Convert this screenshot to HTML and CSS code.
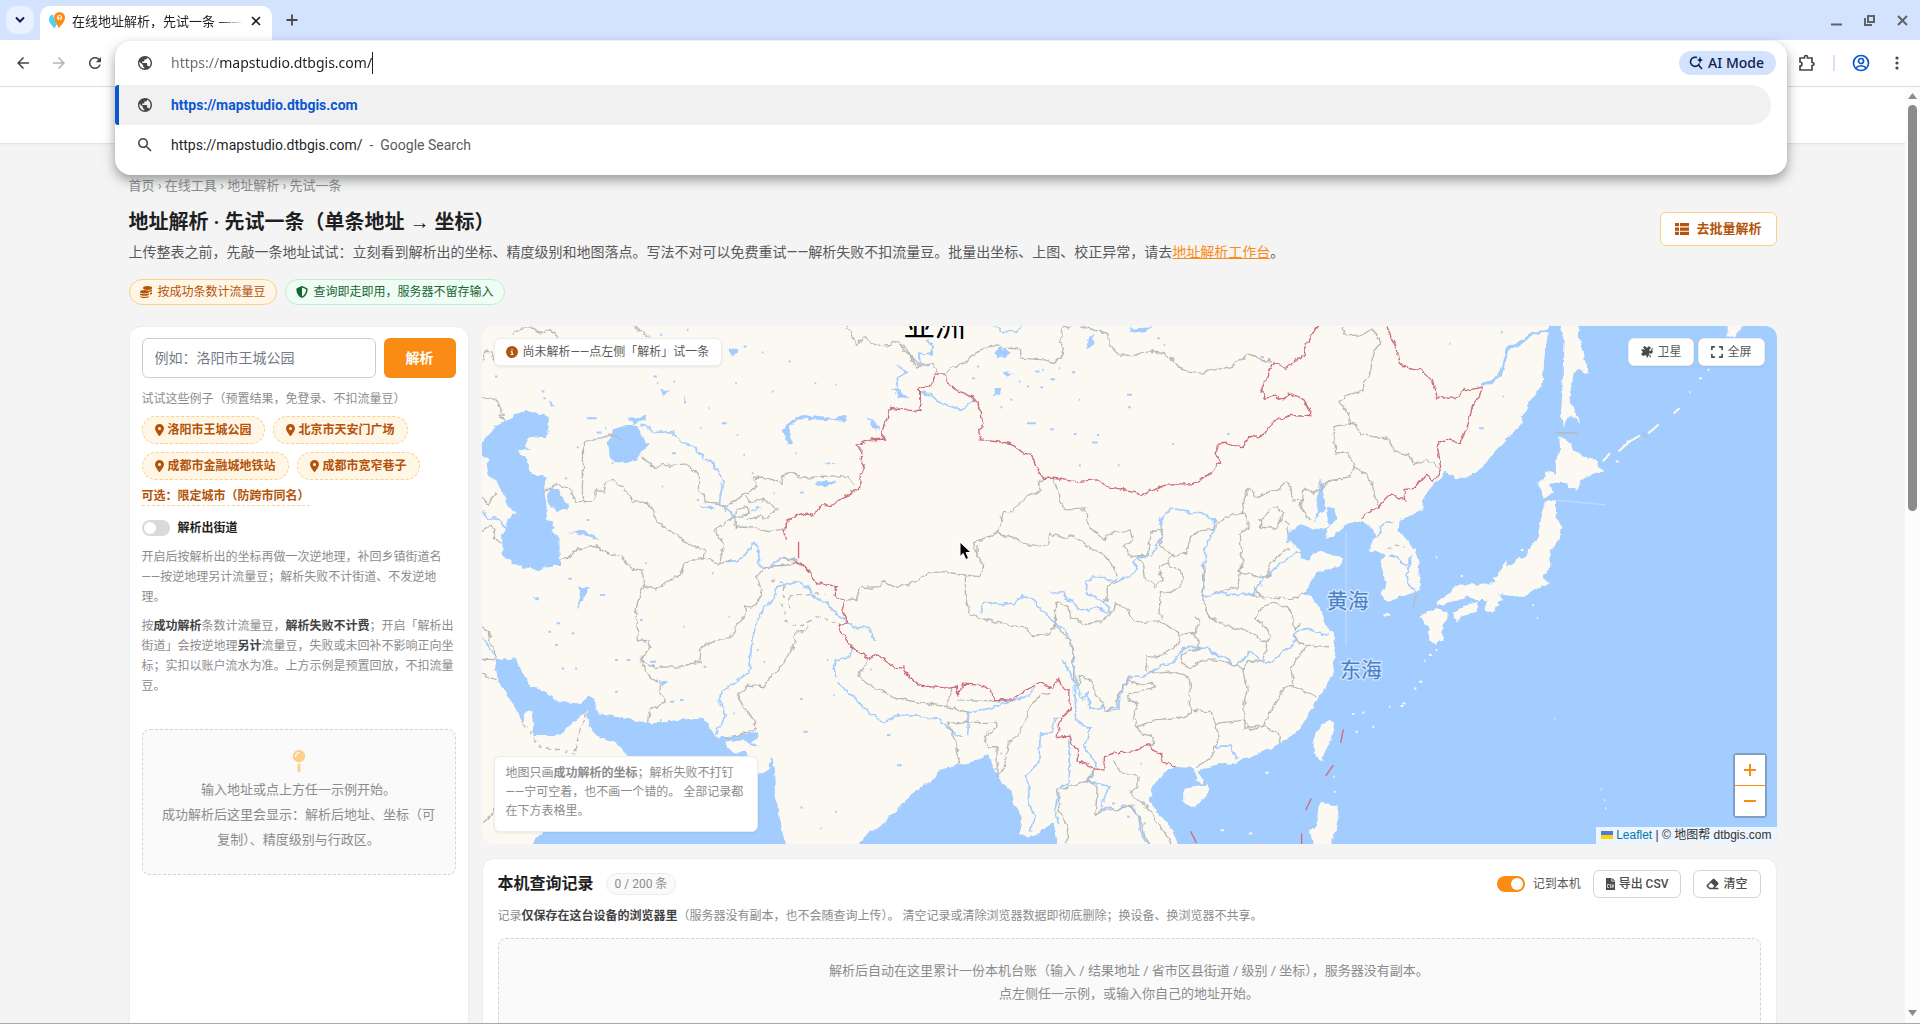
FILE: index.html
```html
<!DOCTYPE html>
<html lang="zh-CN">
<head>
<meta charset="utf-8">
<title>在线地址解析，先试一条</title>
<link rel="stylesheet" href="styles.css">
</head>
<body>
<svg class="defs" aria-hidden="true">
  <symbol id="i-pin" viewBox="0 0 384 512"><path d="M215.700 499.200C267 435 384 279.400 384 192C384 86 298 0 192 0S0 86 0 192c0 87.400 117 243 168.300 307.200c12.300 15.300 35.100 15.300 47.400 0zM192 128a64 64 0 1 1 0 128 64 64 0 1 1 0-128z"/></symbol>
  <symbol id="i-globe" viewBox="2 2 20 20"><path d="M12 2C6.480 2 2 6.480 2 12s4.480 10 10 10 10-4.480 10-10S17.520 2 12 2zm-1 17.930c-3.950-.490-7-3.850-7-7.930 0-.620.080-1.210.210-1.790L9 15v1c0 1.100.900 2 2 2v1.930zm6.900-2.540c-.260-.810-1-1.390-1.900-1.390h-1v-3c0-.550-.450-1-1-1H8v-2h2c.550 0 1-.450 1-1V7h2c1.100 0 2-.900 2-2v-.410c2.930 1.190 5 4.060 5 7.410 0 2.080-.800 3.970-2.100 5.390z"/></symbol>
</svg>
<div class="window">
  <div class="tabstrip">
    <button class="tab-search" aria-label="搜索标签页"><svg width="10" height="8" viewBox="0 0 10 8"><path d="M1 1.500l4 4 4-4" fill="none" stroke="#0b2350" stroke-width="2"/></svg></button>
    <div class="tab">
      <svg width="18" height="18" viewBox="0 0 18 18"><path d="M5 2.500C2 3 1 5 1 7.500 1 11 4 13 6.500 16.500L9 12 6 7z" fill="#4fd0f5"/><path d="M11.500 0A5.500 5.500 0 0 0 6 5.500C6 10 10 12 10.500 16.500 13 13 17 10 17 5.500A5.500 5.500 0 0 0 11.500 0z" fill="#fb8c1a"/><circle cx="11.500" cy="5.500" r="2.600" fill="#fff3dc"/><path d="M10.500 4.500h2l-1 3" fill="none" stroke="#fb8c1a"/></svg>
      <span class="tab-title">在线地址解析，先试一条 ——</span>
      <button class="tab-close" aria-label="关闭"><svg width="10" height="10" viewBox="0 0 10 10"><path d="M1 1l8 8M9 1L1 9" stroke="#1f1f1f" stroke-width="1.600"/></svg></button>
    </div>
    <button class="tab-new" aria-label="新标签页"><svg width="12" height="12" viewBox="0 0 12 12"><path d="M6 0.500v11M0.500 6h11" stroke="#474747" stroke-width="1.800"/></svg></button>
    <div class="win-btns">
      <button aria-label="最小化"><svg width="11" height="11" viewBox="0 0 11 11"><path d="M0 9.500h11" stroke="#5f6368" stroke-width="2"/></svg></button>
      <button aria-label="还原"><svg width="11" height="11" viewBox="0 0 11 11"><path d="M4 1h6v6H4zM1 3v7h7" fill="none" stroke="#5f6368" stroke-width="2"/></svg></button>
      <button aria-label="关闭窗口"><svg width="11" height="11" viewBox="0 0 11 11"><path d="M1 1l9 9M10 1L1 10" stroke="#5f6368" stroke-width="2"/></svg></button>
    </div>
  </div>
  <div class="toolbar">
    <button aria-label="后退"><svg width="18" height="18" viewBox="0 0 24 24" fill="#474747"><path d="M20 11H7.830l5.590-5.590L12 4l-8 8 8 8 1.410-1.410L7.830 13H20v-2z"/></svg></button>
    <button aria-label="前进"><svg width="18" height="18" viewBox="0 0 24 24" fill="#b4b4b4"><path d="M4 11h12.170l-5.590-5.590L12 4l8 8-8 8-1.410-1.410L16.170 13H4v-2z"/></svg></button>
    <button aria-label="刷新"><svg width="18" height="18" viewBox="0 0 24 24" fill="#474747"><path d="M17.650 6.350C16.200 4.900 14.210 4 12 4c-4.420 0-7.990 3.580-7.990 8s3.570 8 7.990 8c3.730 0 6.840-2.550 7.730-6h-2.080c-.820 2.330-3.040 4-5.650 4-3.310 0-6-2.690-6-6s2.690-6 6-6c1.660 0 3.140.690 4.220 1.780L13 11h7V4l-2.350 2.350z"/></svg></button>
    <span class="grow"></span>
    <button aria-label="扩展程序"><svg width="18" height="18" viewBox="0 0 18 18"><path d="M2 4h4.500V3a1.500 1.500 0 0 1 3 0v1H14v4.500h.5a1.500 1.500 0 0 1 0 3H14V16H2v-4a2 2 0 0 0 0-4z" fill="none" stroke="#474747" stroke-width="1.700"/></svg></button>
    <span class="sep"></span>
    <button aria-label="个人资料"><svg width="18" height="18" viewBox="0 0 18 18" fill="none" stroke="#0b57d0" stroke-width="1.700"><circle cx="9" cy="9" r="7.500"/><circle cx="9" cy="7" r="2.500"/><path d="M4 14c2-3 8-3 10 0"/></svg></button>
    <button aria-label="菜单"><svg width="18" height="18" viewBox="0 0 18 18" fill="#474747"><circle cx="9" cy="4" r="1.600"/><circle cx="9" cy="9" r="1.600"/><circle cx="9" cy="14" r="1.600"/></svg></button>
  </div>
  <div class="omnibox">
    <div class="url-row">
      <svg class="ico14" fill="#474747"><use href="#i-globe"/></svg>
      <input class="url" aria-label="地址栏" value="https://mapstudio.dtbgis.com/">
      <button class="ai"><svg width="14" height="14" viewBox="0 0 14 14" fill="none" stroke="#0b2350" stroke-width="1.600"><path d="M8 1.600A4.600 4.600 0 1 0 10.400 7.500M9 8.500l4 4.500"/><path d="M11 0.500l1 2.500 2 1-2 1-1 2.500L10 5 8 4l2-1z" fill="#0b2350" stroke="none"/></svg>AI Mode</button>
    </div>
    <a class="sug active" href="#"><svg class="ico14" fill="#474747"><use href="#i-globe"/></svg><b>https://mapstudio.dtbgis.com</b></a>
    <a class="sug" href="#"><svg class="ico14" viewBox="3 3 18 18" fill="#474747"><path d="M15.500 14h-.790l-.280-.270A6.470 6.470 0 0 0 16 9.500 6.500 6.500 0 1 0 9.500 16c1.610 0 3.090-.590 4.230-1.570l.270.280v.790l5 4.990L20.490 19l-4.990-5zm-6 0C7.010 14 5 11.990 5 9.500S7.010 5 9.500 5 14 7.010 14 9.500 11.990 14 9.500 14z"/></svg><span>https://mapstudio.dtbgis.com/</span><span class="src">- &nbsp;Google Search</span></a>
  </div>

  <div class="viewport">
    <div class="page">
      <header class="site-header"></header>
      <main class="main">
        <nav class="crumbs">首页 › 在线工具 › 地址解析 › 先试一条</nav>
        <div class="head">
          <div>
            <h1>地址解析 · 先试一条（单条地址 → 坐标）</h1>
            <p class="lead">上传整表之前，先敲一条地址试试：立刻看到解析出的坐标、精度级别和地图落点。写法不对可以免费重试——解析失败不扣流量豆。批量出坐标、上图、校正异常，请去<a href="#">地址解析工作台</a>。</p>
          </div>
          <button class="batch"><svg width="14" height="14" viewBox="0 0 14 14"><path d="M0 1h4v3.300H0zM5 1h9v3.300H5zM0 5.400h4v3.300H0zM5 5.400h9v3.300H5zM0 9.800h4v3.300H0zM5 9.800h9v3.300H5z" fill="#b45309"/></svg>去批量解析</button>
        </div>
        <div class="badges">
          <span class="badge amber"><svg width="12" height="12" viewBox="0 0 12 12"><g fill="#b45309"><ellipse cx="7.500" cy="2" rx="4.500" ry="1.900"/><path d="M9 4.500c1.500-.2 2.500-.7 3-1.300v1.300c0 .8-1 1.300-2.500 1.600zM10 7c1-.2 1.600-.5 2-1v1.200c0 .8-.8 1.200-2 1.500zM0 7.300c1 1.200 7.500 1.200 9 0v1.400c-1 1.500-8 1.500-9 0zM0 9.900c1 1.200 7.500 1.200 9 0v.8c-1 1.700-8 1.700-9 0z"/><ellipse cx="4.500" cy="5.800" rx="4.500" ry="1.800"/></g></svg>按成功条数计流量豆</span>
          <span class="badge green"><svg width="12" height="12" viewBox="0 0 512 512"><path fill="#166534" d="M256 0c4.600 0 9.200 1 13.400 2.900L457.700 82.800c22 9.300 38.400 31 38.300 57.200c-.500 99.200-41.300 280.700-213.600 363.200c-16.700 8-36.100 8-52.800 0C57.300 420.700 16.500 239.200 16 140c-.100-26.200 16.300-47.900 38.300-57.200L242.700 2.900C246.800 1 251.400 0 256 0zm0 66.800V444.800C394 378 431.100 230.100 432 141.400L256 66.800z"/></svg>查询即走即用，服务器不留存输入</span>
        </div>
        <div class="cols">
          <section class="card query">
            <form class="ask"><input aria-label="地址" placeholder="例如：洛阳市王城公园"><button type="button">解析</button></form>
            <p class="hint">试试这些例子（预置结果，免登录、不扣流量豆）</p>
            <div class="chips">
              <button><svg class="pin"><use href="#i-pin"/></svg>洛阳市王城公园</button>
              <button><svg class="pin"><use href="#i-pin"/></svg>北京市天安门广场</button>
              <button><svg class="pin"><use href="#i-pin"/></svg>成都市金融城地铁站</button>
              <button><svg class="pin"><use href="#i-pin"/></svg>成都市宽窄巷子</button>
            </div>
            <button class="optional">可选：限定城市（防跨市同名）</button>
            <label class="street"><input class="switch" type="checkbox">解析出街道</label>
            <p class="note">开启后按解析出的坐标再做一次逆地理，补回乡镇街道名——按逆地理另计流量豆；解析失败不计街道、不发逆地理。</p>
            <p class="note">按<b>成功解析</b>条数计流量豆，<b>解析失败不计费</b>；开启「解析出街道」会按逆地理<b>另计</b>流量豆，失败或未回补不影响正向坐标；实扣以账户流水为准。上方示例是预置回放，不扣流量豆。</p>
            <div class="empty result">
              <svg width="14" height="22" viewBox="0 0 320 512"><path fill="#fdcf8a" d="M16 144a144 144 0 1 1 288 0A144 144 0 1 1 16 144zM160 80c8.800 0 16-7.200 16-16s-7.200-16-16-16c-53 0-96 43-96 96c0 8.800 7.200 16 16 16s16-7.200 16-16c0-35.300 28.700-64 64-64zM128 480V317.100c10.400 1.900 21.100 2.900 32 2.900s21.600-1 32-2.900V480c0 17.700-14.300 32-32 32s-32-14.300-32-32z"/></svg>
              <p>输入地址或点上方任一示例开始。<br>成功解析后这里会显示：解析后地址、坐标（可复制）、精度级别与行政区。</p>
            </div>
          </section>
          <div class="right">
            <section class="map">
              <svg class="map-art" viewBox="6 18 3882 1554" preserveAspectRatio="xMidYMid slice">
                <defs><filter id="rough" filterUnits="userSpaceOnUse" x="-60" y="-60" width="4060" height="1760" color-interpolation-filters="sRGB"><feTurbulence type="fractalNoise" baseFrequency="0.05" numOctaves="2" seed="4"/><feDisplacementMap in="SourceGraphic" scale="18" xChannelSelector="R" yChannelSelector="G"/></filter></defs>
                <rect x="-60" y="-60" width="4060" height="1760" fill="#fcf9f2"/>
                <g filter="url(#rough)">
                  <g class="water">
                    <path d="M75 305L100 290 120 278 150 272 175 282 206 288 206 320 198 352 165 350 150 352 130 375 148 390 115 390 118 400 135 408 150 435 148 458 175 470 197 475 192 510 198 540 200 570 198 600 222 605 220 625 210 630 238 655 240 738 210 738 175 750 130 742 85 720 68 700 66 640 80 625 82 600 95 582 115 580 85 560 70 520 50 490 25 460 20 430 30 420 0 405 0 370 20 345 45 320Z"/>
                    <path d="M205 507H240V525L267 553 265 570H230L202 548ZM440 315H475L482 345 505 375 480 400 468 422 440 430 390 420 385 370 400 328ZM445 293L477 292 503 284 494 303 460 310ZM908 325L938 300 965 285 1000 290 1060 297 1100 286 1098 302 1040 302 980 297 955 300 930 320 928 345 940 377 925 375 912 345ZM1150 290L1180 300 1198 325 1178 325 1175 305ZM1000 490L1035 480 1070 487 1035 502ZM1030 423L1072 427 1050 431ZM745 85L775 95 750 110ZM540 208L568 212 550 226ZM207 245L225 260 210 262ZM608 232L620 245 612 250ZM260 640L300 630 330 640 357 667 325 648 290 640ZM1232 210L1260 213 1285 235 1260 232ZM655 557L705 563 690 570ZM1840 40L1838 70 1820 88 1820 60ZM1940 27L2015 22 2000 33 1960 38ZM1545 95L1560 82 1595 98 1570 112 1548 115ZM1565 155L1600 160 1580 168ZM1540 230L1545 210 1563 205 1560 222ZM295 800L330 802 320 820 290 870 300 830ZM540 1080L560 1085 545 1100ZM160 828L180 835 170 845ZM1250 0Z"/>
                    <path d="M48 1020L105 1015 130 1060 155 1100 185 1105 230 1145 300 1150 325 1130 342 1135 355 1180 420 1192 500 1208 600 1200 662 1192 690 1225 710 1255 735 1250 830 1235 832 1260 810 1265 840 1280 820 1278 798 1262 740 1262 740 1280 760 1298 800 1295 790 1370 850 1358 865 1340 870 1310 880 1330 885 1420 900 1500 922 1590H140L185 1540 445 1307 410 1270 350 1250 325 1210 320 1170 300 1190 265 1220 240 1245 165 1245 130 1210 100 1150 60 1090 45 1050Z"/>
                    <path d="M1130 1590L1150 1550 1205 1515 1240 1480 1300 1415 1340 1390 1365 1370 1368 1350 1440 1335 1490 1320 1525 1300 1535 1340 1560 1380 1590 1410 1600 1450 1615 1470 1625 1510 1615 1545 1660 1548 1690 1525 1720 1510 1736 1590Z"/>
                    <path d="M2520 475L2545 620 2500 630 2460 610 2420 640 2420 665 2460 690 2460 715 2485 722 2500 700 2520 690 2530 740 2500 770 2475 815 2500 780 2470 820 2500 840 2525 880 2530 910 2560 940 2565 990 2560 1020 2555 1070 2535 1100 2515 1135 2485 1180 2455 1230 2400 1270 2350 1295 2300 1310 2270 1325 2220 1330 2170 1345 2150 1360 2170 1380 2165 1388 2145 1380 2140 1345 2085 1340 2060 1350 2030 1380 2010 1410 2008 1445 2040 1485 2070 1525 2105 1590H3990V-50H3213L3200 50 3192 100 3185 195 3145 245 3120 310 3040 400 3010 440 2960 472 2925 475 2895 455 2875 480 2855 495 2828 530 2825 570 2760 600 2750 630 2780 660 2805 700 2817 740 2817 810 2760 832 2720 845 2700 825 2718 790 2700 720 2715 705 2685 695 2665 690 2670 670 2685 650 2675 625 2640 605 2595 615 2555 650 2532 655 2545 620 2566 600 2565 575 2548 560 2520 575 2500 610Z"/>
                  </g>
                  <g class="land">
                    <path d="M2490 705L2520 690 2550 708 2587 715 2580 735 2545 745 2510 758 2480 790ZM135 1175L155 1170 160 1230 145 1235 130 1210Z"/>
                    <path d="M3238 0H3286L3305 95 3325 165 3295 150 3278 160 3265 240 3285 280 3298 308 3282 290 3260 290 3248 325 3240 290 3245 200 3248 60ZM3740 0H3810L3760 50H3740ZM3235 345L3255 360 3280 390 3320 415 3350 420 3355 440 3370 455 3340 460 3300 480 3290 512 3240 485 3205 492 3220 518 3185 535 3182 505 3170 500 3175 485 3195 470 3192 455 3225 460 3225 430 3238 390ZM3363 425L3390 397 3395 402ZM3412 395L3440 360 3480 345 3440 370ZM3500 340L3535 312 3510 335ZM3575 282L3600 258Z"/>
                    <path d="M3195 545L3225 540 3225 590 3245 620 3230 670 3210 690 3208 740 3190 770 3200 790 3180 800 3160 810 3140 825 3120 830 3070 825 3050 820 3065 835 3035 880 3010 865 3020 840 2990 840 2960 830 2920 845 2870 858 2868 845 2905 820 2920 800 2970 792 3040 790 3040 775 3068 740 3075 715 3080 740 3140 700 3170 650 3180 600ZM2915 875L2960 855 2990 845 2995 860 2975 880 2940 890 2930 908ZM2820 885L2865 865 2900 875 2900 895 2885 920 2885 960 2865 975 2845 960 2845 920 2830 910ZM2705 885L2725 877 2730 883 2710 890Z"/>
                    <path d="M2545 1200L2560 1205 2555 1250 2535 1290 2522 1325 2500 1295 2498 1260 2520 1220ZM2125 1400L2185 1392 2185 1415 2145 1462 2108 1445 2108 1420ZM2515 1448L2570 1455 2575 1500 2560 1540 2545 1590H2500L2488 1530 2505 1525Z"/>
                  </g>
                  <g class="river">
                    <path d="M480 316L505 320 515 338 575 335 600 365 650 385 670 418 690 420 728 480 718 548 765 592M6 570L25 595 65 600 80 628M765 592L800 585 815 568 842 563M745 725L770 722 795 705 820 668 832 680 840 740 860 745 900 715 955 718M1250 135L1280 158 1248 180 1252 205M1320 135L1315 100"/>
                    <path d="M1540 18L1565 35H1610L1625 18M1340 60L1358 80 1355 105 1315 100 1318 130 1345 138M1320 220L1355 225 1380 248 1445 272 1480 238"/>
                    <path d="M1818 810L1820 785 1835 770 1870 770 1885 785H1915L1930 770 1950 768 1973 745 1957 728 1975 710 2012 708 2045 650 2040 600 2072 565H2092L2130 580 2160 577 2202 600V625L2187 660 2172 690 2178 710 2167 735 2172 790 2165 830 2215 818 2240 823H2318L2355 770 2400 730 2445 700 2462 698M1818 800V820L1850 830 1865 850 1890 862 1885 880"/>
                    <path d="M1710 820L1745 815 1760 840 1780 845 1790 870 1820 873 1850 860 1880 880M1503 880L1508 847 1600 853 1625 828 1660 838 1680 868 1705 885 1725 915 1750 925 1770 960 1778 1010 1790 1110 1810 1138 1822 1110 1825 1165 1850 1165 1875 1158M1748 1020L1780 1085 1788 1195 1805 1218 1830 1225 1813 1280 1850 1335 1840 1355 1820 1385 1885 1397 1860 1470 1880 1462 1905 1472 1935 1453 1958 1462 1975 1490 1980 1530 2002 1575M1875 1172L1915 1170 1918 1120 1945 1072 1990 1070 2030 1040 2075 1030 2110 982H2180L2210 1010 2235 1008 2260 1040 2285 1020 2310 993 2340 1025 2375 1027 2400 1000 2440 975 2445 935 2480 928 2545 945M2200 1278H2248L2268 1317"/>
                    <path d="M1765 1255L1767 1390 1733 1403 1725 1470 1735 1510M1740 1188L1725 1190 1710 1240 1680 1242 1675 1325 1635 1370 1645 1400 1645 1450 1665 1490 1650 1535M2735 610L2730 605 2695 620 2698 640 2685 655M2725 708L2745 710 2775 738 2795 710 2778 760 2785 800 2800 810M2880 595"/>
                    <path d="M1665 1100L1630 1135 1580 1145 1530 1165 1465 1175 1462 1250M1250 1185L1330 1190 1380 1198 1410 1230 1440 1250M708 1245L735 1185 715 1140 730 1110 808 1055 815 960 835 890 858 855 885 835 890 800 945 785 980 800 1000 830 1040 848 1070 885 1105 905 1118 922H1168L1175 945 1185 965M1075 1090L1110 1120 1150 1165 1205 1207 1255 1188M1120 985L1105 1010 1065 1020 1060 1040 1068 1075M6 950L50 1015"/>
                    <path stroke-width="9" d="M3205 30L3160 40 3110 75 3080 85 3070 120 3060 160 3035 185 3005 195"/>
                  </g>
                  <g class="line">
                    <path d="M95 45L125 25 160 25 180 40 210 30 235 50M460 18L485 35 505 48M6 125L15 95 35 95 40 120M6 235L35 232 55 250 70 285 58 290 75 303M6 535L25 550 50 520M6 635L30 618 45 625 40 655 65 670M310 545V370L397 343 425 360M310 545H343L345 515 370 508 375 490 400 478 445 520 455 545 500 548 520 570 530 605 580 640 630 675 675 690 672 715M310 545L290 545 265 505 235 495 200 505 190 520M482 402L513 440 620 432 640 450 655 470 655 515 672 520 675 545 715 550 740 560 780 530 810 515 830 500 820 475 865 475 905 490 908 465 935 455 965 475 1050 467 1100 473 1120 495M765 622V570L800 560 810 580 765 592V622H800L830 625 865 635 905 628M715 550L740 575M760 590L735 610 705 625 705 640 730 670 725 700 718 732 755 720M795 530L815 548 850 535 870 555 890 565 860 595 830 590 800 600M718 732L672 712 640 720 612 730 600 765 550 790 530 810 490 797 488 750 455 745 425 710 385 700 350 678 290 688 265 715 240 718M850 745L830 770 845 815 830 855 795 860 795 890 765 920 760 945 700 965 662 985 660 1025 595 1040 525 1042 480 1023 510 980 510 962 475 960 465 860 490 800M480 1023L512 1075 540 1088V1125L557 1135 550 1150 508 1168 502 1208M6 920L25 935 30 970 42 980 45 1015M6 1018H30L50 1020M6 1060L30 1075H50M735 1255L825 1230 820 1195 790 1165 772 1125 805 1095 850 1100 880 1060 905 1035 945 970 945 945 985 920M6 1510L30 1490 50 1460M1100 18L1130 75 1150 50 1185 75 1225 78 1245 65 1272 78 1290 108 1318 138M1100 840L1130 835 1140 803 1200 800 1210 785 1240 800 1280 795 1350 758 1400 755 1440 765 1500 770 1510 735 1490 705 1490 675M850 745L880 738 930 735 950 720 900 715"/>
                    <path d="M1260 75L1285 105 1310 142 1355 128 1375 160M1395 160L1410 145 1460 125 1495 95 1550 75 1575 85 1620 88 1622 115 1690 120 1720 128 1745 110 1752 85 1738 60 1750 25 1770 18M1800 18L1885 42 1890 80 1915 105 1960 107 2000 93 2040 100 2080 120 2105 150 2160 160 2200 150 2255 140 2300 103 2330 110 2345 122 2375 123M1688 475L1675 490V515L1640 530 1605 560 1600 575 1568 575 1562 610 1550 638 1480 668 1485 700 1510 735M1718 475L1735 525 1735 545 1755 570 1818 567V600L1835 630 1875 658 1885 640 1950 630 1955 660 1930 680 1950 710 2000 705 2012 640 2045 630 2040 680 2080 705 2118 700 2130 650 2160 630 2195 625 2220 610 2245 585 2290 580 2285 540 2308 505 2325 530 2390 510 2415 485 2430 500 2435 540 2465 542 2470 505 2500 520 2540 490 2580 475M1550 638L1590 650 1630 670 1690 680 1705 670 1708 640 1750 655 1780 645 1820 680 1865 700 1895 735 1912 770 1905 790 1880 800 1880 840 1865 850M2465 542L2460 565 2490 600M2290 580L2305 620 2280 640 2280 700 2290 720 2275 755 2340 772 2360 770 2370 730 2410 695 2425 688M2340 600L2370 570 2390 560 2410 575 2400 600 2385 625 2340 622ZM2410 600L2425 610 2420 640M1975 715L1990 740 1995 780 2025 800 2045 780 2035 740 2060 725 2065 740 2100 755 2108 780 2100 800 2070 818 2040 815 2035 880 2050 895M2080 705L2060 725M2170 735L2170 800 2165 830 2180 880 2190 895 2260 925 2300 930 2340 960 2360 965M2280 755L2270 800 2220 815"/>
                    <path d="M1455 765L1455 830 1470 885 1540 905 1640 925 1660 950 1710 940 1725 910 1725 855 1740 850 1765 860 1770 890 1820 912 1860 905 1900 870 1905 850 1940 865 1955 900 1990 910 2035 905 2090 930 2100 950 2085 980 2045 1005 1995 1010 2000 1050 2025 1060 2080 1055 2125 1070 2130 1100 2125 1130 2130 1180 2110 1190 2020 1200 1970 1220 1960 1190 1970 1150 1940 1135 1950 1120 2010 1105 2025 1100 2010 1085 1970 1095 1945 1075 1915 1120 1910 1160 1880 1170 1845 1120 1830 1080 1800 1070 1795 1095 1780 1080 1775 980 1770 960 1720 915M2100 950L2130 935 2155 960 2155 985 2105 1000 2105 1030 2130 1045 2165 1020 2210 1020 2250 1030 2290 1045 2300 1025 2350 1020 2360 965 2370 945 2355 920 2325 895 2345 860 2375 850 2420 860 2440 900 2440 930 2465 910M2140 890L2155 900 2145 940 2130 935M2440 940L2450 965 2480 975 2460 1000 2430 1040 2440 1100 2410 1100 2395 1130 2370 1170 2350 1215 2290 1225 2290 1150 2300 1110 2290 1045M2130 1170L2190 1175 2205 1210 2290 1200 2310 1230 2350 1218 2390 1235 2400 1270M2205 1210L2215 1250 2200 1280 2195 1310 2150 1340M2440 1100L2510 1130M1970 1220L1975 1235 2018 1250 2015 1275 1995 1275M2318 823L2380 835 2400 835 2450 835 2470 815M2480 975L2545 980M2320 800L2350 838"/>
                    <path d="M1132 1068L1165 1015M1132 1065L1175 1100 1240 1130 1300 1145 1400 1160 1415 1105M1405 1160L1460 1175 1460 1205 1405 1210 1415 1240 1425 1255 1438 1335M1460 1207H1548L1550 1220 1510 1250 1525 1280 1550 1280 1550 1370 1572 1340 1585 1260 1610 1250 1640 1185 1650 1155 1685 1125 1710 1120M1430 1140L1530 1145 1580 1140M1845 1345L1820 1380 1735 1410 1735 1465 1765 1525 1755 1590M1820 1380L1850 1400 1845 1485 1870 1470 1905 1470 1950 1455 1975 1490 2005 1575M1900 1320L1925 1360 1975 1370 1975 1400 1950 1420 2000 1460 2040 1520 2075 1575M2585 18L2595 48 2640 45 2675 28 2700 65 2675 110 2670 155 2648 190 2650 213 2600 225 2578 245 2600 275 2610 310 2560 320 2565 400 2600 395 2620 440 2610 470 2560 480 2520 495M2610 310L2630 315 2640 345 2720 355 2740 395 2785 405 2800 435 2840 420 2875 445M2620 440L2660 465 2680 510 2690 555"/>
                  </g>
                  <g class="line dash"><path d="M130 1210L180 1280 290 1303M285 1290L300 1230 315 1200 320 1170M870 780L915 790 905 850 915 900 955 920 1010 890 1075 910M925 830L1030 820M925 830L930 880M2720 690L2740 678 2775 682"/></g>
                  <g class="frontier">
                    <path d="M1318 210L1320 270 1295 275 1232 262 1205 340 1215 358 1170 360 1128 375 1145 390 1143 420 1155 445 1140 465 1138 505 1100 525 1055 555 1018 560 1005 585 970 578 920 600 918 620 908 630 920 660M940 725L975 740 1000 780 1035 795 1065 797 1065 825 1095 845 1085 870 1103 905 1075 915 1090 950 1120 985 1170 1018 1185 1002 1240 1040 1270 1045 1290 1075 1320 1095 1350 1100 1410 1104 1428 1100 1432 1125 1450 1092 1500 1095 1525 1105 1545 1138 1595 1140 1655 1100 1680 1088 1715 1105 1735 1078 1750 1108 1768 1115 1770 1165 1735 1210 1730 1250 1768 1245 1775 1275 1792 1285 1790 1320 1835 1345 1870 1350 1872 1310 1900 1298 1960 1295 2000 1272 2020 1290 2040 1300 2045 1325 2085 1340"/>
                    <path d="M1320 270L1320 205 1355 195 1365 163H1395L1400 185 1430 212 1475 230 1503 275 1505 320 1495 335 1500 360 1590 370 1630 400 1655 405 1670 450 1690 475 1720 475 1785 485 1850 480 1880 500 1965 515 1980 528 2060 492 2135 492 2170 475 2220 430 2203 405 2215 370 2235 367 2280 383 2310 350 2350 345 2375 305 2430 287 2490 290 2490 275 2460 230 2425 220 2405 240 2385 228 2355 235 2340 215 2360 170 2380 127 2415 143 2445 120 2465 115 2475 75 2500 35 2515 10M2715 10L2730 50 2745 80 2755 130 2770 140 2820 150 2855 180 2870 235H2922L2950 213 3005 202 2993 235 2975 260 2960 320 2938 368 2895 357 2870 375 2880 445 2870 470 2850 485 2835 465 2800 508 2770 512 2772 540 2730 522 2695 560 2655 580 2643 600"/>
                  </g>
                </g>
                <path class="strait" d="M3225 339H3290M3485 338L3498 355M2798 862L2807 822"/>
                <path class="dashes" d="M955 665V715M2588 1228L2580 1268M2558 1335L2535 1367M2492 1435L2475 1470M2130 1533L2148 1568M2463 1540V1575"/>
                <path class="specks" d="M505 50h5M540 45h6M620 30h5M790 80h9M845 98h5M700 135h5M520 170h10M530 190h5M580 185h5M625 120h5M685 265h4M765 190h5M925 125h6M1003 190h5M1065 195h4M875 215h5M45 170h7M185 215h8M190 235h7M320 295h30M350 338h14M375 325h4M290 382h6M395 430h5M575 400h12M255 475h6M370 518h6M545 500h4M660 325h4M725 310h14M770 345h4M945 400h4M790 405h4M880 520h4M960 518h10M815 460h5M650 540h6M320 600h8M495 730h5M695 760h5M265 776h10M360 825h15M230 910h10M205 935h8M275 940h8M225 975h8M245 1045h7M285 1045h6M405 1020h8M440 1020h10M405 1115h8M480 900h8M490 965h8M610 920h4M745 890h4M510 1025h18M570 1145h12M600 1140h10M540 1200h4M670 1040h8M960 1137h7M970 1235h12M1060 1125h4M1220 1245h10M1250 1335h14M960 1462h7M1065 1475h5M1020 1525h4M850 1025h5M830 990h5M1040 1020h4M1170 1048h4M760 1180h4M1490 140h6M1475 175h8M1665 155h12M1710 178h14M1775 157h9M1735 145h4M1615 185h5M1640 200h6M1680 202h8M1590 240h6M1560 262h6M1940 225h14M1943 262h8M1640 310h26M1710 328h10M1780 342h8M1835 368h16M1850 345h6M1795 437h6M1912 436h5M2075 372h5M2240 342h7M1685 150h5M1795 240h4M2030 55h8M2050 75h4M2340 112h10M3060 37h6M2905 72h4M3065 230h4M2995 325h14M2280 1525h4M1980 1330h4M1895 1450h8M1940 1490h8M1990 1510h6M1985 1540h8M1560 1300h5"/>
                <path class="isles" d="M2845 1005h8M2865 990h5M2800 1105h7M2815 1085h10M2765 1150h9M2760 1158h8M2615 1182h6M2645 1177h6M2625 1235h7M2675 1220h6M2725 1160h4M2830 1022h4M3155 855h4M3168 895h4M3220 1195h3M3360 1408h3M3370 1440h3M3373 1465h3M2355 1358h9M2220 1530h10M2305 1540h10M2558 1370h4M2560 1415h5M3655 175h8M3680 150h6M3625 217h4M3120 690h8M2940 768h6M3405 425h8M2865 712h5M3578 281l18-16M3503 340l30-26M3413 395l30-28 34-20M3366 424l20-22"/>
                <path d="M3228 541L3375 555M2596 635V975" stroke="#c0dcff" stroke-width="4" fill="none"/>
                <g class="sea"><text x="2538" y="863">黄海</text><text x="2578" y="1070">东海</text></g>
                <text class="asia" x="1270" y="50">亚洲</text>
              </svg>
              <div class="float status"><svg width="12" height="12" viewBox="0 0 512 512"><path fill="#b45309" d="M256 512A256 256 0 1 0 256 0a256 256 0 1 0 0 512zM216 336h24V272H216c-13.300 0-24-10.700-24-24s10.700-24 24-24h48c13.300 0 24 10.700 24 24v88h8c13.300 0 24 10.700 24 24s-10.700 24-24 24H216c-13.300 0-24-10.700-24-24s10.700-24 24-24zm40-208a32 32 0 1 1 0 64 32 32 0 1 1 0-64z"/></svg>尚未解析——点左侧「解析」试一条</div>
              <div class="tools">
                <button class="float"><svg width="12" height="12" viewBox="0 0 12 12" fill="#4b4b4b"><path d="M2 1l2-1 2 2 2-2 2 2-2 2 1 1 2-1 1 2-2 2-2-1 0 2-2 3-1-3-3 1-2-2 2-2-2-2 2-1 2 1zM8 8l2 2-1 2zM10 3l2-1-1 3z"/></svg>卫星</button>
                <button class="float"><svg width="12" height="12" viewBox="0 32 448 448"><path fill="#4b4b4b" d="M32 32C14.300 32 0 46.300 0 64v96c0 17.700 14.300 32 32 32s32-14.300 32-32V96h64c17.700 0 32-14.300 32-32s-14.300-32-32-32H32zM64 352c0-17.700-14.300-32-32-32s-32 14.300-32 32v96c0 17.700 14.300 32 32 32h96c17.700 0 32-14.300 32-32s-14.300-32-32-32H64V352zM320 32c-17.700 0-32 14.300-32 32s14.300 32 32 32h64v64c0 17.700 14.300 32 32 32s32-14.300 32-32V64c0-17.700-14.300-32-32-32H320zM448 352c0-17.700-14.300-32-32-32s-32 14.300-32 32v64H320c-17.700 0-32 14.300-32 32s14.300 32 32 32h96c17.700 0 32-14.300 32-32V352z"/></svg>全屏</button>
              </div>
              <div class="float legend">地图只画<b>成功解析的坐标</b>；解析失败不打钉——宁可空着，也不画一个错的。 全部记录都在下方表格里。</div>
              <div class="zoom"><button aria-label="放大"><svg width="12" height="12"><path d="M6 0v12M0 6h12" stroke="#fa8c16" stroke-width="2"/></svg></button><button aria-label="缩小"><svg width="12" height="12"><path d="M0 6h12" stroke="#fa8c16" stroke-width="2"/></svg></button></div>
              <div class="attrib"><svg width="12" height="8"><path fill="#4c7be1" d="M0 0h12v4H0z"/><path fill="#ffd500" d="M0 4h12v4H0z"/></svg> <a href="#">Leaflet</a> | © 地图帮 dtbgis.com</div>
              <svg class="cursor" width="14" height="20" viewBox="0 0 14 20"><path d="M1 1v14.500l3.200-3 2.600 6 2.800-1.200-2.600-5.800H12z" fill="#000" stroke="#fff"/></svg>
            </section>
            <section class="card records">
              <div class="rec-head">
                <h2>本机查询记录</h2><span class="count">0 / 200 条</span><span class="grow"></span>
                <label class="local"><input class="switch" type="checkbox" checked>记到本机</label>
                <button><svg width="9" height="12" viewBox="0 0 9 12"><path d="M0 0h5.500v3.500H9V12H0zM6.300 0L9 2.800H6.300z" fill="#4b4b4b"/><path d="M3 6.500H1.500v3H3M5.300 6.500H4v1.500h1.200v1.500H4M6.200 6.500l.7 3 .8-3" fill="none" stroke="#fff" stroke-width=".7"/></svg>导出 CSV</button>
                <button><svg width="13" height="12" viewBox="16 32 544 456"><path fill="#4b4b4b" d="M290.700 57.400L57.400 290.700c-25 25-25 65.500 0 90.500l80 80c12 12 28.300 18.700 45.300 18.700H512c17.700 0 32-14.300 32-32s-14.300-32-32-32H387.900L518.600 285.300c25-25 25-65.500 0-90.500L381.300 57.400c-25-25-65.500-25-90.500 0zM297.400 416H182.600l-80-80L227.300 211.300 364.700 348.700 297.400 416z"/></svg>清空</button>
              </div>
              <p class="rec-note">记录<b>仅保存在这台设备的浏览器里</b>（服务器没有副本，也不会随查询上传）。 清空记录或清除浏览器数据即彻底删除；换设备、换浏览器不共享。</p>
              <div class="empty ledger">解析后自动在这里累计一份本机台账（输入 / 结果地址 / 省市区县街道 / 级别 / 坐标），服务器没有副本。<br>点左侧任一示例，或输入你自己的地址开始。</div>
            </section>
          </div>
        </div>
      </main>
    </div>
    <div class="scroll" aria-hidden="true"><svg width="9" height="6"><path d="M0 6L4.500 0 9 6z" fill="#8b8b8b"/></svg><i></i><svg width="9" height="6"><path d="M0 0h9L4.500 6z" fill="#8b8b8b"/></svg></div>
  </div>
</div>
</body>
</html>
```
FILE: styles.css
```css
* { box-sizing: border-box; }
body, h1, h2, p { margin: 0; }
body { font: 12px/20px Roboto, "Noto Sans CJK SC", sans-serif; color: #1f1f1f; background: #f4f4f4; }
button { font: inherit; color: inherit; border: 0; padding: 0; background: none; display: inline-flex; align-items: center; justify-content: center; }
input { font: inherit; margin: 0; }
.defs { position: absolute; width: 0; height: 0; }
.grow { flex: 1; }
.window { position: relative; display: flex; flex-direction: column; height: 100vh; overflow: hidden; border-bottom: 1px solid #a9a9a9; }

/* browser frame */
.tabstrip { display: flex; align-items: center; height: 40px; padding-left: 6px; background: #d3e2fd; }
.tab-search { width: 28px; height: 28px; border-radius: 10px; background: #e9f0fe; margin-right: 6px; }
.tab { display: flex; align-items: center; align-self: flex-end; width: 232px; height: 34px; padding: 0 9px 4px 8px; gap: 6px; background: #fff; border-radius: 10px 10px 0 0; }
.tab-title { flex: 1; font: 13px/20px "Noto Sans", "Noto Sans CJK SC", sans-serif; white-space: nowrap; overflow: hidden; mask-image: linear-gradient(90deg, #000 85%, transparent); }
.tab-close { width: 14px; height: 14px; }
.tab-new { width: 28px; margin-left: 6px; }
.win-btns { display: flex; gap: 22px; margin-left: auto; padding-right: 12px; }
.toolbar { display: flex; align-items: center; gap: 18px; height: 47px; padding: 0 14px; background: #fff; border-bottom: 1px solid #dcdcdc; }
.sep { width: 2px; height: 16px; margin: 0 -1px; background: #d3e2fd; }
.omnibox { position: absolute; z-index: 5; top: 41px; left: 115px; right: 133px; height: 134px; background: #fff; border-radius: 16px; box-shadow: 0 5px 12px rgba(60, 64, 67, .5); }
.url-row { display: flex; align-items: center; gap: 19px; height: 44px; padding: 0 11px 0 23px; }
.ico14 { width: 14px; height: 14px; flex: none; }
.url { field-sizing: content; border: 0; outline: 0; border-right: 1px solid #1f1f1f; padding: 0; height: 22px; font: 14px/22px "Noto Sans", sans-serif; color: transparent; background: linear-gradient(90deg, #6b6b6b 48px, #1f1f1f 48px); background-clip: text; -webkit-background-clip: text; }
.ai { margin-left: auto; height: 24px; padding: 0 12px 0 10px; gap: 5px; border-radius: 12px; background: #d3e2fd; color: #0b2350; font: 500 14px/20px "Noto Sans", sans-serif; }
.sug { display: flex; align-items: center; gap: 19px; height: 40px; padding-left: 23px; margin-right: 16px; font-size: 14px; color: #1f1f1f; text-decoration: none; }
.sug b { font-weight: 700; color: #0b57d0; }
.sug.active { background: #f1f1f1; border-left: 4px solid #0b57d0; padding-left: 19px; border-radius: 3px 20px 20px 3px; }
.src { margin-left: -12px; color: #5a5a5a; }

.viewport { display: flex; flex: 1; min-height: 0; }
.page { flex: 1; overflow: hidden; background: #f4f4f4; }
.scroll { display: flex; flex-direction: column; align-items: center; justify-content: space-between; width: 15px; padding: 6px 0 7px; background: #fcfcfc; }
.scroll i { width: 9px; height: 44%; margin: 6px 0 auto; border-radius: 5px; background: #8b8b8b; }
.site-header { height: 57px; background: #fff; border-bottom: 1px solid #e3e3e3; box-shadow: 0 1px 3px rgba(0, 0, 0, .04); }

/* page heading */
.main { max-width: 1680px; margin: 0 auto; padding: 32px 16px 0; }
.crumbs { font-size: 13px; color: #8c8c8c; }
.head { display: flex; align-items: center; justify-content: space-between; margin-top: 11px; }
h1 { font-size: 20px; line-height: 30px; font-weight: 700; font-family: Roboto, "Liberation Sans", "Noto Sans CJK SC", sans-serif; }
.lead { font-size: 14px; line-height: 22px; margin-top: 4px; color: #595959; }
.lead a { color: #fa8c16; }
.batch { height: 34px; padding: 0 14px; gap: 7px; margin-bottom: 12px; border: 1px solid #fdcf8a; border-radius: 6px; background: #fff; color: #b45309; font-size: 13px; font-weight: 700; white-space: nowrap; }
.badges { display: flex; gap: 8px; margin-top: 16px; }
.badge { display: flex; align-items: center; gap: 6px; height: 26px; padding: 0 10px; border: 1px solid; border-radius: 13px; }
.amber { color: #b45309; background: #fff6e5; border-color: #fdcf8a; }
.green { color: #166534; background: #f0fdf4; border-color: #bbf0cc; }

.cols { display: grid; grid-template-columns: 340px 1fr; gap: 13px; margin-top: 21px; }
.card { background: #fff; border: 1px solid #ececec; border-radius: 12px; }
.query { padding: 11px 12px; }
.ask { display: flex; gap: 8px; }
.ask input { flex: 1; min-width: 0; height: 40px; padding: 0 12px; border: 1px solid #c9ced6; border-radius: 6px; font-size: 14px; }
.ask input::placeholder { color: #757b85; }
.ask button { width: 72px; border-radius: 6px; background: #fa8c16; color: #fff; font-size: 14px; font-weight: 700; }
.hint { margin-top: 11px; color: #8c8c8c; }
.chips { display: flex; flex-wrap: wrap; gap: 8px; margin-top: 7px; }
.chips button { height: 28px; padding: 0 12px; gap: 4px; border: 1px dashed #fdcf8a; border-radius: 14px; background: #fff6e5; color: #b45309; font-weight: 700; }
.pin { width: 9px; height: 12px; fill: #b45309; }
.optional { margin-top: 8px; border-bottom: 1px dashed #fdcf8a; line-height: 17px; color: #b45309; font-weight: 700; }
.street { display: flex; align-items: center; gap: 8px; margin-top: 12px; font-weight: 700; }
.switch { appearance: none; display: flex; align-items: center; width: 28px; height: 16px; padding: 2px; border-radius: 8px; background: #d9d9d9; }
.switch::before { content: ""; width: 12px; height: 12px; border-radius: 50%; background: #fff; }
.switch:checked { background: #fa8c16; justify-content: flex-end; }
.note { margin-top: 9px; color: #8c8c8c; }
.note b, .rec-note b { color: #434343; }
.empty { border: 1px dashed #d4d4d4; border-radius: 8px; background: #fafafa; color: #8c8c8c; font-size: 13px; text-align: center; }
.result { margin-top: 33px; padding: 20px 19px 22px; }
.result svg { display: block; margin: 0 auto 5px; }
.result p { line-height: 25px; }

/* map */
.right { display: flex; flex-direction: column; gap: 14px; min-width: 0; }
.map { position: relative; height: 518px; border-radius: 12px; overflow: hidden; }
.map-art { display: block; width: 100%; height: 100%; }
.water { fill: #a3ccff; }
.land { fill: #fcf9f2; }
.river { fill: none; stroke: #a3ccff; stroke-width: 5; }
.line { fill: none; stroke: #b8b8b8; stroke-width: 4; }
.strait { fill: none; stroke: #b4bcc6; stroke-width: 5; }
.dash { stroke-dasharray: 14 12; }
.frontier, .dashes { fill: none; stroke: #cd6a7c; stroke-width: 4; }
.specks { stroke: #a3ccff; stroke-width: 6; }
.isles { fill: none; stroke: #fcf9f2; stroke-width: 6; }
.sea { font-size: 63px; fill: #4a80c4; stroke: #cfe4ff; stroke-width: 8; paint-order: stroke; }
.asia { font-size: 93px; fill: #000; stroke: #fff; stroke-width: 6; paint-order: stroke; }
.float { border: 1px solid #ececec; border-radius: 6px; background: #fff; color: #595959; box-shadow: 0 1px 3px rgba(0, 0, 0, .08); }
.status { position: absolute; top: 12px; left: 12px; display: flex; align-items: center; gap: 5px; height: 28px; padding: 0 12px 0 11px; }
.tools { position: absolute; top: 12px; right: 12px; display: flex; gap: 4px; }
.tools button { height: 28px; padding: 0 12px; gap: 4px; }
.legend { position: absolute; left: 12px; bottom: 12px; width: 264px; padding: 7px 12px 10px 11px; line-height: 19px; color: #8c8c8c; }
.zoom { position: absolute; right: 10px; bottom: 26px; display: flex; flex-direction: column; border: 2px solid rgba(0, 0, 0, .22); border-radius: 4px; background-clip: padding-box; }
.zoom button { width: 30px; height: 30px; background: #fff; }
.zoom button:first-child { height: 31px; border-bottom: 1px solid #fa8c16; }
.attrib { position: absolute; right: 0; bottom: 0; padding: 0 5px; background: rgba(255, 255, 255, .8); color: #333; font: 12px/17px "Liberation Sans", "Noto Sans CJK SC", sans-serif; }
.attrib a { color: #0078a8; text-decoration: none; }
.cursor { position: absolute; left: 477px; top: 215px; }

/* records */
.records { padding: 11px 15px 40px; }
.rec-head { display: flex; align-items: center; }
h2 { font-size: 16px; line-height: 24px; }
.count { margin-left: 12px; padding: 0 8px; border: 1px solid #ececec; border-radius: 11px; background: #fafafa; color: #8c8c8c; }
.local { display: flex; align-items: center; gap: 8px; color: #595959; }
.rec-head button { height: 28px; margin-left: 12px; padding: 0 12px; gap: 4px; border: 1px solid #d4d4d4; border-radius: 6px; background: #fff; color: #4b4b4b; font-weight: 500; }
.rec-note { margin-top: 8px; color: #8c8c8c; }
.ledger { margin-top: 12px; padding: 20px 20px 60px; line-height: 23px; }
```
